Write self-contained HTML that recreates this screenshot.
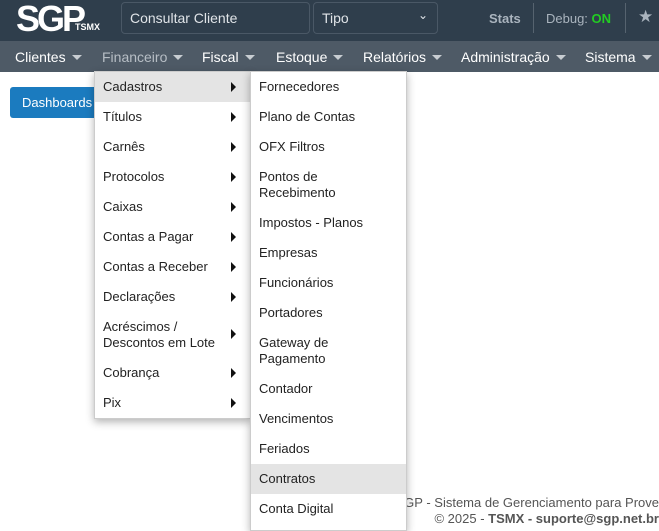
<!DOCTYPE html>
<html><head><meta charset="utf-8"><style>
*{box-sizing:border-box;margin:0;padding:0}
body{width:659px;height:524px;overflow:hidden;position:relative;background:#fff;font-family:"Liberation Sans",Arial,sans-serif;font-size:13px;color:#222}
.top{position:absolute;left:0;top:0;width:659px;height:41px;background:#2f3e4c}
.logo{position:absolute;left:16px;top:1px;color:#fff;font-weight:bold;font-size:36px;letter-spacing:-3px;font-family:"Liberation Sans",sans-serif;line-height:36px}
.tsmx{position:absolute;left:75px;top:22px;color:#fff;font-size:9px;font-weight:bold;letter-spacing:0}
.inp{position:absolute;top:2px;height:32px;border:1px solid #4a5866;border-radius:4px;background:#2f3e4c;color:#e0e4e8;font-size:14px;padding:7px 8px}
.nav{position:absolute;left:0;top:41px;width:659px;height:31px;background:#4e5a66}
.nav span{position:absolute;top:8px;color:#fff;font-size:14px}
.car{display:inline-block;width:0;height:0;border-left:5px solid transparent;border-right:5px solid transparent;border-top:5px solid #c8cdd2;margin-left:6px;vertical-align:2px}
.menu{position:absolute;background:#fff;box-shadow:0 3px 8px rgba(0,0,0,.3);border:1px solid #ccc}
.it{position:relative;height:30px;padding:8px 8px 0 8px;font-size:13px;line-height:14px}
.it.two{height:46px;line-height:16px;padding-top:7px}
.hl{background:#e4e4e4}
.ar{position:absolute;right:14px;top:10px;width:0;height:0;border-top:5px solid transparent;border-bottom:5px solid transparent;border-left:5px solid #111}
.two .ar{top:17px}
</style></head><body>
<div class="top">
<div class="logo">SGP</div><div class="tsmx">TSMX</div>
<div class="inp" style="left:121px;width:189px">Consultar Cliente</div>
<div class="inp" style="left:313px;width:125px">Tipo<span style="position:absolute;right:9px;top:5px;font-size:12px">&#8964;</span></div>
<span style="position:absolute;left:489px;top:11px;color:#aab4be;font-weight:bold;font-size:13px">Stats</span>
<div style="position:absolute;left:533px;top:3px;width:1px;height:30px;background:#56636f"></div>
<span style="position:absolute;left:546px;top:11px;color:#aab4be;font-size:13px">Debug: <b style="color:#22cc22">ON</b></span>
<div style="position:absolute;left:625px;top:3px;width:1px;height:30px;background:#56636f"></div>
<span style="position:absolute;left:638px;top:7px;color:#aab4be;font-size:17px">&#9733;</span>
</div>
<div class="nav">
<span style="left:15px">Clientes<i class="car"></i></span>
<span style="left:102px;color:#b7bec5">Financeiro<i class="car"></i></span>
<span style="left:202px">Fiscal<i class="car"></i></span>
<span style="left:276px">Estoque<i class="car"></i></span>
<span style="left:363px">Relatórios<i class="car"></i></span>
<span style="left:461px">Administração<i class="car"></i></span>
<span style="left:585px">Sistema<i class="car"></i></span>
</div>
<div style="position:absolute;left:10px;top:87px;width:90px;height:31px;background:#1b7bbf;border-radius:3px;color:#fff;font-size:13px;padding:8px 12px">Dashboards</div>
<div style="position:absolute;right:0;top:495px;color:#555;font-size:13px;text-align:right;line-height:16px;white-space:nowrap">SGP - Sistema de Gerenciamento para Prove<br>© 2025 - <b>TSMX - suporte@sgp.net.br</b></div>
<div class="menu" style="left:94px;top:71px;width:157px;height:348px">
<div class="it hl">Cadastros<i class="ar"></i></div>
<div class="it">Títulos<i class="ar"></i></div>
<div class="it">Carnês<i class="ar"></i></div>
<div class="it">Protocolos<i class="ar"></i></div>
<div class="it">Caixas<i class="ar"></i></div>
<div class="it">Contas a Pagar<i class="ar"></i></div>
<div class="it">Contas a Receber<i class="ar"></i></div>
<div class="it">Declarações<i class="ar"></i></div>
<div class="it two">Acréscimos /<br>Descontos em Lote<i class="ar"></i></div>
<div class="it">Cobrança<i class="ar"></i></div>
<div class="it">Pix<i class="ar"></i></div>
</div>
<div class="menu" style="left:250px;top:71px;width:157px;height:460px">
<div class="it">Fornecedores</div>
<div class="it">Plano de Contas</div>
<div class="it">OFX Filtros</div>
<div class="it two">Pontos de<br>Recebimento</div>
<div class="it">Impostos - Planos</div>
<div class="it">Empresas</div>
<div class="it">Funcionários</div>
<div class="it">Portadores</div>
<div class="it two">Gateway de<br>Pagamento</div>
<div class="it">Contador</div>
<div class="it">Vencimentos</div>
<div class="it">Feriados</div>
<div class="it hl">Contratos</div>
<div class="it">Conta Digital</div>
</div>
</body></html>
